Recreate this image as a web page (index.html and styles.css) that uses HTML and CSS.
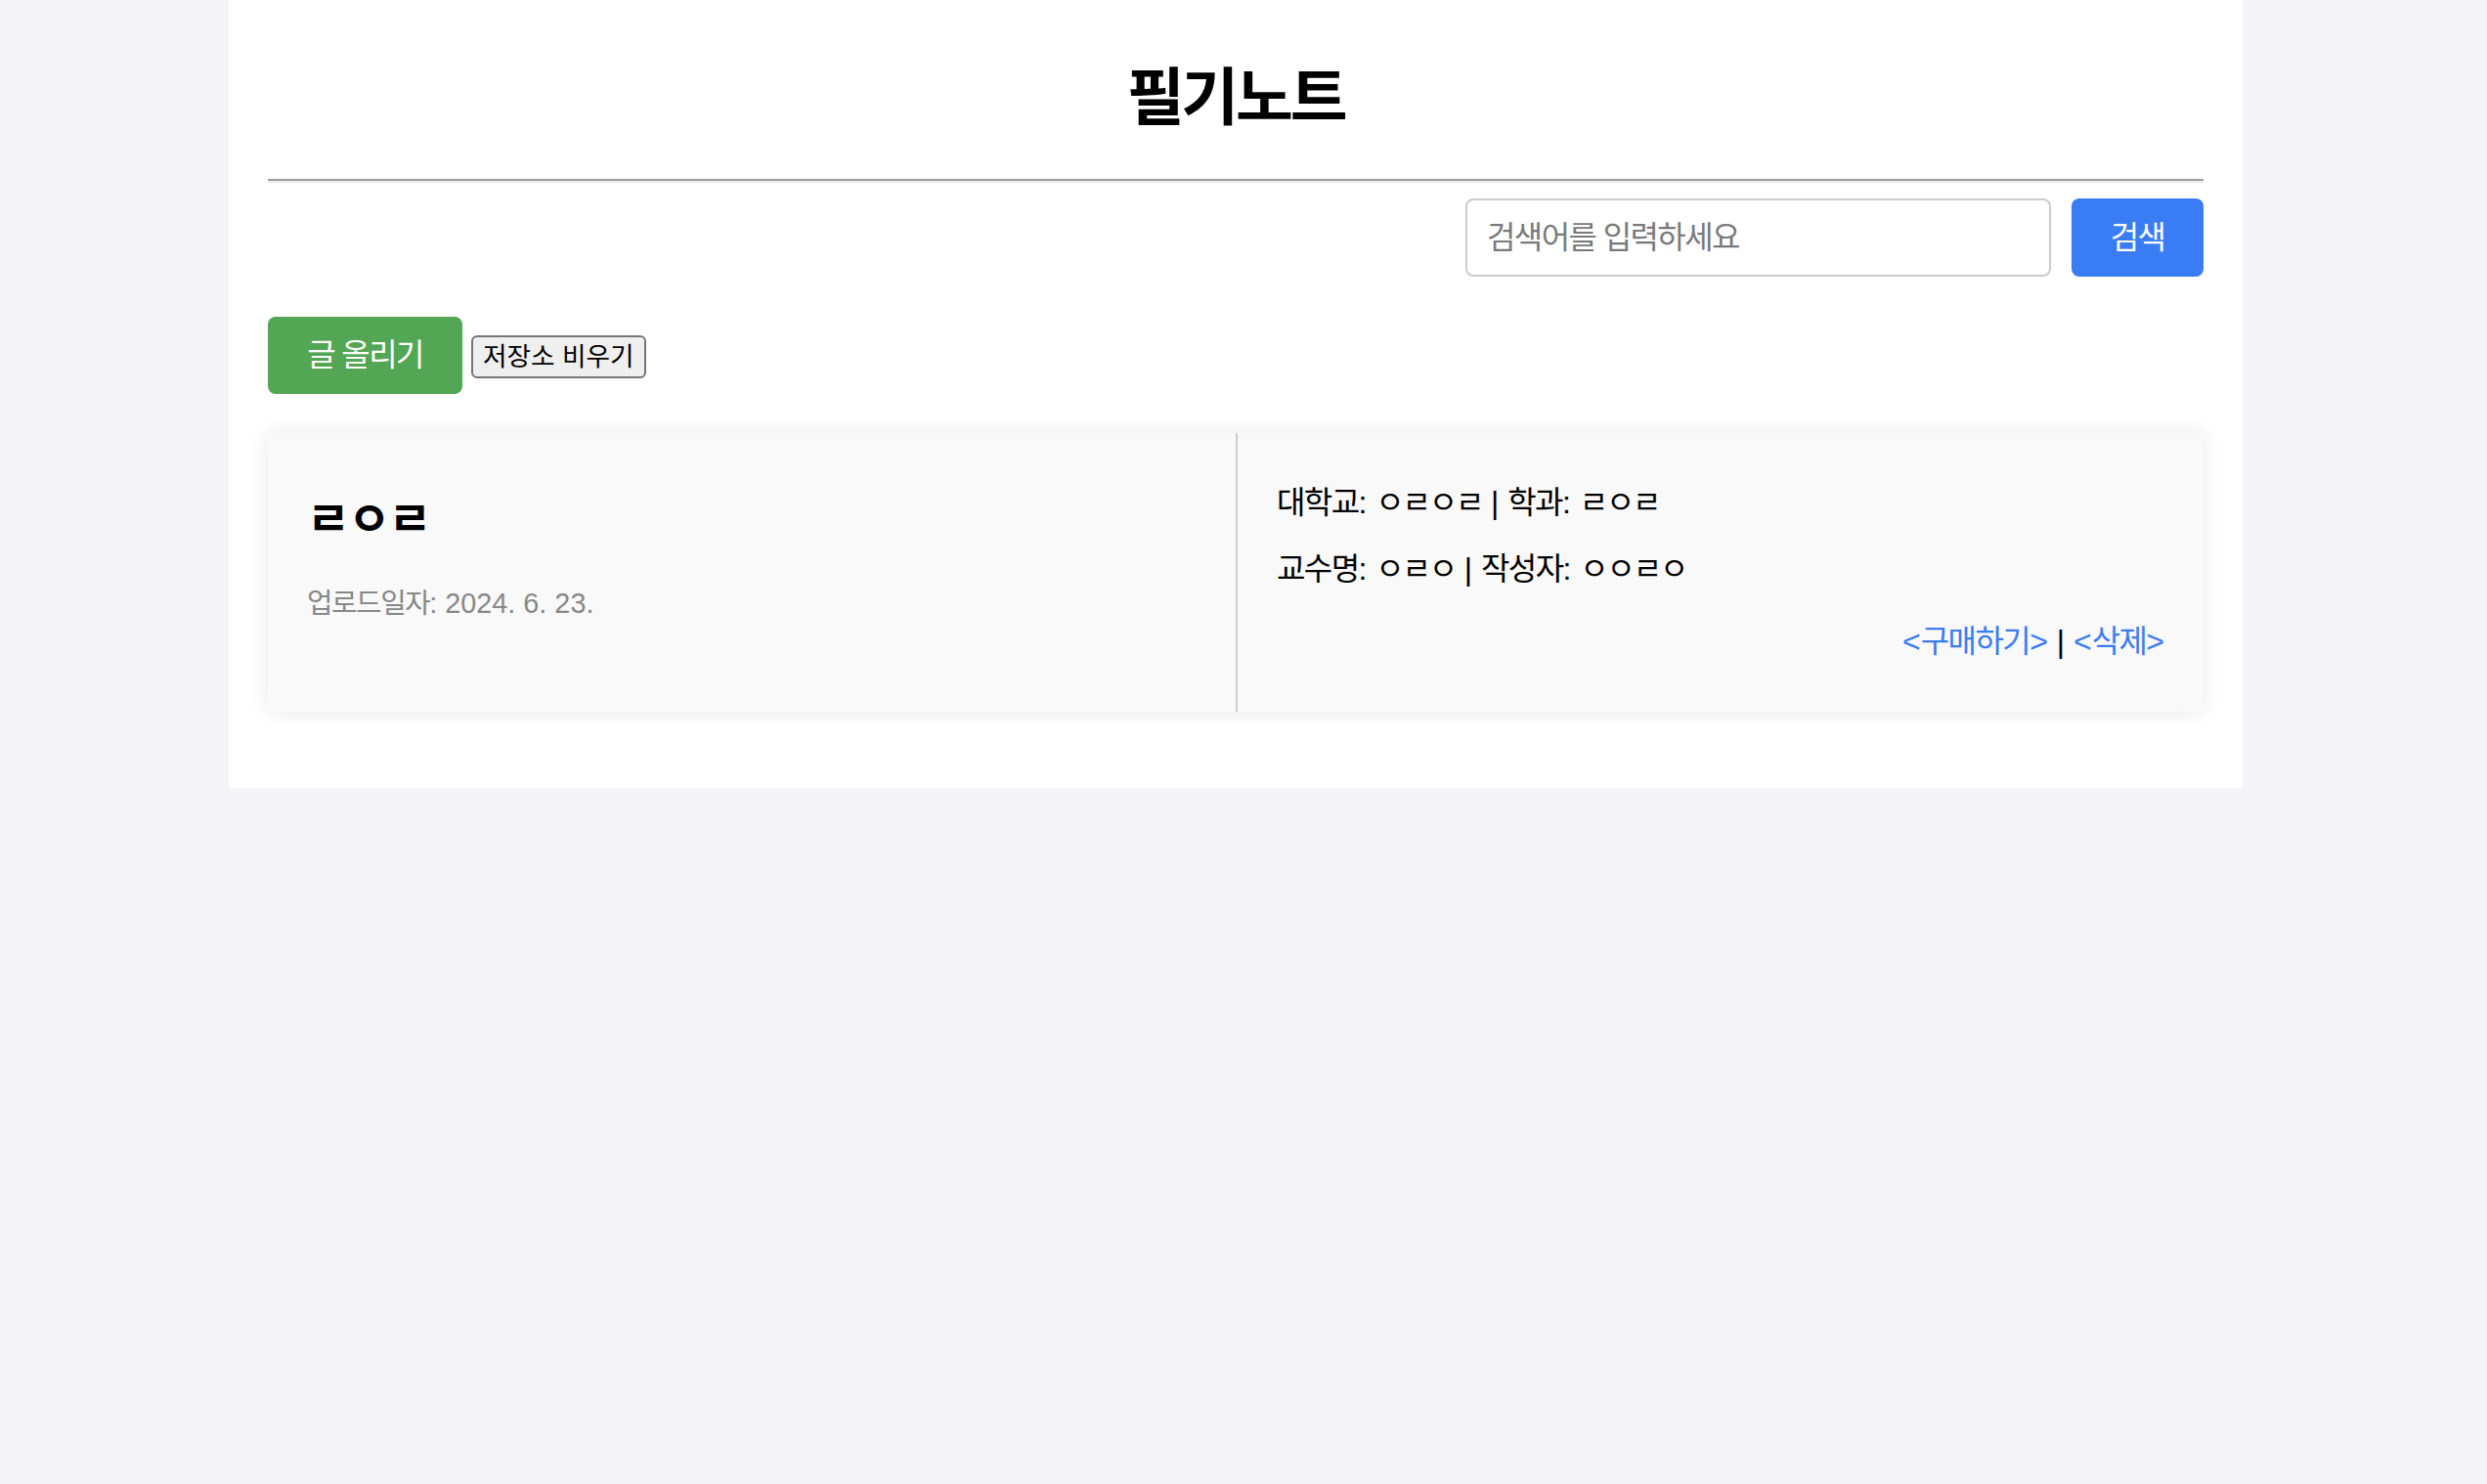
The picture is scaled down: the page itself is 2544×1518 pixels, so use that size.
FILE: index.html
```html
<!DOCTYPE html>
<html lang="ko">
<head>
<meta charset="utf-8">
<title>필기노트</title>
<link rel="stylesheet" href="styles.css">
</head>
<body>
<div class="container">
  <h1 class="title ko">필기노트</h1>
  <hr class="rule">
  <div class="search-row">
    <input class="search-input ko" type="text" placeholder="검색어를 입력하세요">
    <button class="search-btn ko" type="button">검색</button>
  </div>
  <div class="action-row">
    <button class="post-btn ko" type="button">글 올리기</button>
    <button class="clear-btn" type="button">저장소 비우기</button>
  </div>
  <div class="card">
    <div class="card-left">
      <h3 class="note-title jm-lg">ㄹㅇㄹ</h3>
      <p class="note-date"><span class="ko">업로드일자</span>: 2024. 6. 23.</p>
    </div>
    <div class="card-right">
      <p class="info info-first"><span class="ko">대학교</span>: <span class="jm">ㅇㄹㅇㄹ</span> | <span class="ko">학과</span>: <span class="jm">ㄹㅇㄹ</span></p>
      <p class="info info-second"><span class="ko">교수명</span>: <span class="jm">ㅇㄹㅇ</span> | <span class="ko">작성자</span>: <span class="jm">ㅇㅇㄹㅇ</span></p>
      <p class="info links"><a class="link" href="#">&lt;<span class="ko">구매하기</span>&gt;</a> | <a class="link" href="#">&lt;<span class="ko">삭제</span>&gt;</a></p>
    </div>
  </div>
</div>
</body>
</html>
```

FILE: styles.css
```css
html, body {
  margin: 0;
}

body {
  background: #f4f4f9;
  padding-right: 16px;
  font-family: "Liberation Sans", "Noto Sans CJK KR", sans-serif;
  color: #000;
}

.ko {
  letter-spacing: -0.05em;
}

.jm {
  letter-spacing: -0.07em;
}

.jm-lg {
  letter-spacing: -0.05em;
}

.container {
  width: 1980px;
  margin: 0 auto;
  background: #ffffff;
  padding: 40px 40px 78px;
}

.title {
  margin: 22px 0 0;
  font-size: 64px;
  line-height: 76px;
  font-weight: 700;
  text-align: center;
}

.rule {
  margin: 45px 0 0;
  height: 0;
  border: 0;
  border-top: 2px solid #9c9c9c;
  border-bottom: 2px solid #ececec;
}

.search-row {
  display: flex;
  justify-content: flex-end;
  align-items: center;
  gap: 21px;
  margin-top: 16px;
}

.search-input {
  box-sizing: border-box;
  width: 599px;
  height: 80px;
  padding: 0 20px;
  border: 2px solid #cccccc;
  border-radius: 8px;
  font-family: "Liberation Sans", "Noto Sans CJK KR", sans-serif;
  font-size: 32px;
  color: #333;
  background: #fff;
  outline: none;
}

.search-input::placeholder {
  color: #7a7a7a;
}

.search-btn {
  box-sizing: border-box;
  width: 135px;
  height: 80px;
  padding: 0;
  border: 0;
  border-radius: 8px;
  background: #3a7cf4;
  color: #ffffff;
  font-family: "Liberation Sans", "Noto Sans CJK KR", sans-serif;
  font-size: 32px;
  line-height: 80px;
}

.action-row {
  display: flex;
  align-items: center;
  gap: 9px;
  margin-top: 41px;
}

.post-btn {
  box-sizing: border-box;
  width: 199px;
  height: 79px;
  padding: 0;
  border: 0;
  border-radius: 8px;
  background: #53a653;
  color: #ffffff;
  font-family: "Liberation Sans", "Noto Sans CJK KR", sans-serif;
  font-size: 32px;
  line-height: 79px;
}

.clear-btn {
  box-sizing: border-box;
  height: 44px;
  padding: 0 10px;
  margin-top: 3px;
  border: 2px solid #767676;
  border-radius: 6px;
  background: #efefef;
  color: #000;
  font-family: "Liberation Sans", "Noto Sans CJK KR", sans-serif;
  font-size: 26.67px;
  line-height: 38px;
}

.card {
  display: grid;
  grid-template-columns: 1fr 1fr;
  margin-top: 40px;
  background: #f9f9f9;
  box-shadow: 0 0 20px rgba(0, 0, 0, 0.09);
}

.card-left {
  padding: 40px;
}

.note-title {
  margin: 20px 0 0;
  font-size: 48px;
  line-height: 58px;
  font-weight: 700;
}

.note-date {
  margin: 39px 0 0;
  font-size: 28.8px;
  line-height: 35px;
  color: #888888;
}

.card-right {
  padding: 40px;
  border-left: 2px solid #cccccc;
}

.info {
  margin: 0;
  font-size: 32px;
  line-height: 38px;
}

.info-first {
  margin-top: 12px;
}

.info-second {
  margin-top: 30px;
}

.links {
  margin-top: 36px;
  margin-bottom: 13px;
  text-align: right;
}

.link {
  color: #3a7cf4;
  text-decoration: none;
}
```
